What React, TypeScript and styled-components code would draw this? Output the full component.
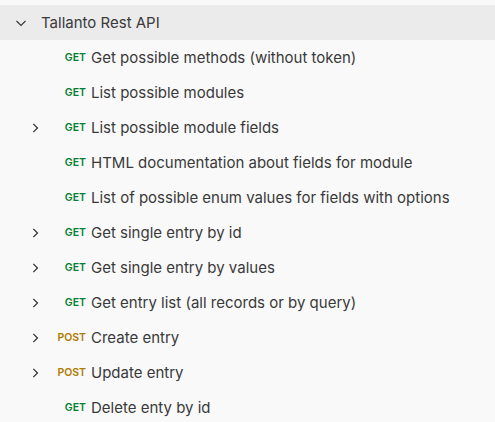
import styled, { createGlobalStyle } from "styled-components";

const GlobalStyle = createGlobalStyle`
  body {
    margin: 0;
    background: #f9f9f9;
    font-family: "Inter", "Noto Sans", sans-serif;
  }
  * {
    box-sizing: border-box;
  }
`;

const Tree = styled.div`
  padding-top: 5px;
  width: 495px;
  color: #3a3a3a;
`;

const Header = styled.div`
  display: flex;
  align-items: center;
  height: 35px;
  background: #ebebeb;
  font-size: 15px;
  padding-left: 14px;
`;

const HeaderTitle = styled.span`
  margin-left: 13px;
`;

const Row = styled.div`
  display: flex;
  align-items: center;
  height: 35px;
  font-size: 15px;
`;

const Toggle = styled.div`
  width: 40px;
  padding-left: 30px;
  display: flex;
  align-items: center;
`;

const Method = styled.span<{ $kind: string }>`
  width: 46px;
  text-align: right;
  font-size: 10.5px;
  font-weight: 600;
  color: ${(p) => (p.$kind === "POST" ? "#ad7a03" : "#007f31")};
  margin-right: 5px;
`;

const Name = styled.span`
  white-space: nowrap;
`;

const ChevronDown = () => (
  <svg width="14" height="14" viewBox="0 0 14 14" fill="none">
    <path d="M2.5 5l4.5 4.5 4.5-4.5" stroke="#3a3a3a" strokeWidth="1.2" />
  </svg>
);

const ChevronRight = () => (
  <svg width="12" height="14" viewBox="0 0 12 14" fill="none">
    <path d="M4 2l5 5-5 5" stroke="#2a2a2a" strokeWidth="1.4" />
  </svg>
);

const items = [
  { m: "GET", name: "Get possible methods (without token)", sub: false },
  { m: "GET", name: "List possible modules", sub: false },
  { m: "GET", name: "List possible module fields", sub: true },
  { m: "GET", name: "HTML documentation about fields for module", sub: false },
  { m: "GET", name: "List of possible enum values for fields with options", sub: false },
  { m: "GET", name: "Get single entry by id", sub: true },
  { m: "GET", name: "Get single entry by values", sub: true },
  { m: "GET", name: "Get entry list (all records or by query)", sub: true },
  { m: "POST", name: "Create entry", sub: true },
  { m: "POST", name: "Update entry", sub: true },
  { m: "GET", name: "Delete enty by id", sub: false },
];

export default function App() {
  return (
    <>
      <GlobalStyle />
      <Tree>
        <Header>
          <ChevronDown />
          <HeaderTitle>Tallanto Rest API</HeaderTitle>
        </Header>
        {items.map((it, i) => (
          <Row key={i}>
            <Toggle>{it.sub && <ChevronRight />}</Toggle>
            <Method $kind={it.m}>{it.m}</Method>
            <Name>{it.name}</Name>
          </Row>
        ))}
      </Tree>
    </>
  );
}
